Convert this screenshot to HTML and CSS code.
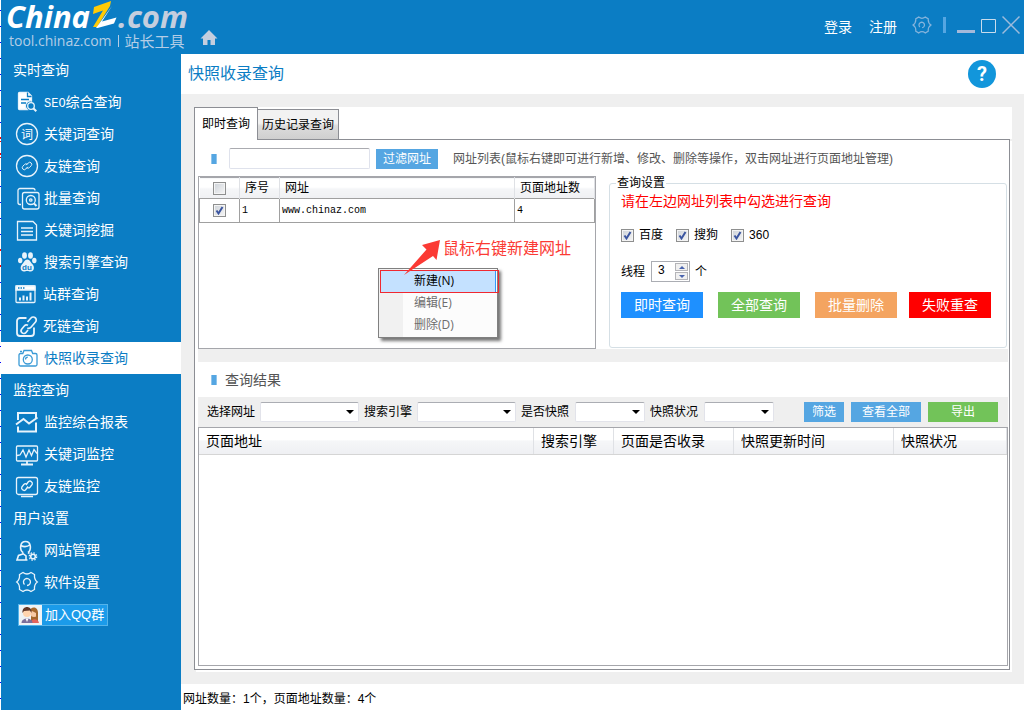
FILE: index.html
```html
<!DOCTYPE html>
<html lang="zh-CN">
<head>
<meta charset="utf-8">
<meta name="viewport" content="width=device-width, initial-scale=1">
<title>快照收录查询 - 站长工具</title>
<link rel="stylesheet" href="styles.css">
</head>
<body>
<div class="app">
  <header class="topbar">
    <a class="brand" href="#" aria-label="ChinaZ.com 站长工具">
      <span class="brand-name">China<svg class="brand-mark" width="30" height="30" viewBox="0 0 30 30" aria-hidden="true"><path d="M5 7 22 1 21 6 8 27H4L14 10.500 4 14z" fill="#ffcb05"/><path d="M23 6 13 21.500 27.500 17.500 25 23.500 8.500 28H7z" fill="#fff"/></svg><span class="brand-tld">.com</span></span>
      <span class="brand-sub"><span>tool.chinaz.com</span><span class="brand-rule"></span><span class="brand-cn">站长工具</span></span>
    </a>
    <a class="home" href="#" aria-label="首页"><svg width="18" height="16" viewBox="0 0 18 16"><path d="M9 0 0.500 8.500H3V15h4.500v-5h3v5H15V8.500h2.500z" fill="#c5cede"/></svg></a>
    <nav class="account">
      <a href="#">登录</a>
      <a href="#">注册</a>
    </nav>
    <div class="window-tools">
      <button class="tool" type="button" aria-label="设置"><svg width="20" height="20" viewBox="0 0 24 24" fill="none" stroke="#86b4dc" stroke-width="1.500"><path d="M8 2.500Q12 5.500 16 2.500L19.500 4.500Q19 9.500 22.800 12 19 14.500 19.500 19.500L16 21.500Q12 18.500 8 21.500L4.500 19.500Q5 14.500 1.200 12 5 9.500 4.500 4.500z"/><path d="M9.500 14.500A3.300 3.300 0 1 1 12 15.300"/></svg></button>
      <span class="divider"></span>
      <button class="tool" type="button" aria-label="最小化"><svg width="18" height="20" viewBox="0 0 18 20"><path d="M0 15h18v3H0z" fill="#a5b9da"/></svg></button>
      <button class="tool" type="button" aria-label="最大化"><svg width="15" height="20" viewBox="0 0 15 20"><path d="M.5 4.500h14v13H.5z" fill="none" stroke="#c9dcec"/></svg></button>
      <button class="tool" type="button" aria-label="关闭"><svg width="18" height="20" viewBox="0 0 18 20"><path d="M.5 1.500l17 17M17.500 1.500l-17 17" stroke="#9dbbdc" stroke-width="1.500"/></svg></button>
    </div>
  </header>

  <div class="body">
    <nav class="sidebar">
      <h2 class="side-title">实时查询</h2>
      <a class="side-item" href="#"><svg class="icon" viewBox="0 0 24 24"><path d="M4.500 2.500H13l3.500 3.500v5a5 5 0 0 0-4.500 8.500H4.500a1 1 0 0 1-1-1v-15a1 1 0 0 1 1-1z" fill="#fff"/><path d="M12.500 2.500v4h4" fill="none" stroke="#0b7dc4"/><path d="M6 9.500h8M6 13h5" stroke="#0b7dc4" stroke-width="1.300"/><circle cx="16" cy="16" r="3.300"/><path d="M18.300 18.300l3 3" stroke-width="2"/></svg><span><span class="latin">SEO</span>综合查询</span></a>
      <a class="side-item" href="#"><svg class="icon" viewBox="0 0 24 24"><circle cx="12" cy="12" r="10.500"/><text x="12" y="16.500" class="icon-word">词</text></svg><span>关键词查询</span></a>
      <a class="side-item" href="#"><svg class="icon" viewBox="0 0 24 24"><circle cx="12" cy="12" r="10.500"/><path stroke-width="1" d="M11.200 11.200l2-2.200a2 2 0 0 1 3 2.700l-1.700 1.800a2 2 0 0 1-2.700.2M12.800 12.800l-2 2.200a2 2 0 0 1-3-2.700l1.700-1.800a2 2 0 0 1 2.700-.2"/></svg><span>友链查询</span></a>
      <a class="side-item" href="#"><svg class="icon" viewBox="0 0 24 24"><path d="M6 18.500H5a2 2 0 0 1-2-2v-12a2 2 0 0 1 2-2h13a2 2 0 0 1 2 2"/><rect x="7.500" y="6.500" width="16.500" height="16.500" rx="2"/><circle cx="15.800" cy="14" r="4.500"/><circle cx="15.800" cy="14" r="1.200"/><path d="M19 17.500l2.500 2.500" stroke-width="2"/></svg><span>批量查询</span></a>
      <a class="side-item" href="#"><svg class="icon" viewBox="0 0 24 24"><path d="M2.500 3.500h15.500l3.500 3.500v15h-19z"/><path d="M6 10h12M6 13.500h12M6 17h12"/></svg><span>关键词挖掘</span></a>
      <a class="side-item" href="#"><svg class="icon" viewBox="0 0 24 24"><g fill="#e8f3fb" stroke="none"><ellipse cx="9.500" cy="5.500" rx="2.400" ry="3.200"/><ellipse cx="15.500" cy="5.500" rx="2.400" ry="3.200"/><ellipse cx="5.200" cy="10.500" rx="2.200" ry="2.800"/><ellipse cx="19.300" cy="10.500" rx="2.200" ry="2.800"/><path d="M12.300 9.500c2.500 0 3.500 3 5 4.500 3 3 1.500 7.500-1.500 7.500-2 0-2-.5-3.500-.5s-2 .5-3.500.5c-3 0-4.500-4.500-1.500-7.500 1.500-1.500 2.500-4.500 5-4.500z"/></g><text x="12" y="19.500" class="icon-du">du</text></svg><span>搜索引擎查询</span></a>
      <a class="side-item side-item-wide" href="#"><svg class="icon" viewBox="0 0 24 24"><rect x="1" y="4" width="19" height="16.500" rx="1"/><path d="M1 4h19v4H1z" fill="#fff"/><path d="M3 6h7" stroke="#0b7dc4" stroke-dasharray="1.500 1"/><path d="M5 18.500v-3M8.500 18.500v-5M12 18.500v-4M15.500 18.500v-8" stroke-width="2"/></svg><span>站群查询</span></a>
      <a class="side-item side-item-wide" href="#"><svg class="icon" viewBox="0 0 24 24"><path stroke-width="1.800" d="M11.500 4H5a3 3 0 0 0-3 3v12a3 3 0 0 0 3 3h11a3 3 0 0 0 3-3v-5.500"/><path stroke-width="1.700" d="M12.500 8l3.500-4a3 3 0 0 1 4.500 4L16 13.200a3 3 0 0 1-3.600.7M13 11.300a3 3 0 0 0-3.700.7L6.800 15a2.700 2.700 0 0 0 4.200 3.500l2-2.500"/></svg><span>死链查询</span></a>
      <a class="side-item is-active" href="#" aria-current="page"><svg class="icon" viewBox="0 0 24 24"><path d="M5.500 7.500h2.300l1.200-3h7.500l1.200 3h2.800a1.500 1.500 0 0 1 1.500 1.500v9.500a1.500 1.500 0 0 1-1.500 1.500h-15A1.500 1.500 0 0 1 4 18.500V9a1.500 1.500 0 0 1 1.500-1.500z"/><circle cx="12.800" cy="13.500" r="4.500"/><path d="M10.500 13.500a2.300 2.300 0 0 1 2.300-2.300M5 5.500h2"/></svg><span>快照收录查询</span></a>

      <h2 class="side-title">监控查询</h2>
      <a class="side-item" href="#"><svg class="icon" viewBox="0 0 24 24"><path stroke-width="2" d="M3 10V3h18v5M3 16.500v5h18v-9"/><path stroke-width="2" d="M1 14.500l7.500-5.500 5.500 4.500 8.500-6"/></svg><span>监控综合报表</span></a>
      <a class="side-item" href="#"><svg class="icon" viewBox="0 0 24 24"><rect x="1.500" y="4" width="21" height="15" rx="1"/><path d="M2 13.500l3-.5 3-5 3 7 3-7 2.500 5.500 2.500-6 3 4"/><path d="M12 19v3M6 22.500h12" stroke-width="1.800"/></svg><span>关键词监控</span></a>
      <a class="side-item" href="#"><svg class="icon" viewBox="0 0 24 24"><rect x="1.500" y="3.500" width="21" height="17" rx="2"/><path d="M11 11l2.500-3.500a2.500 2.500 0 0 1 3.700 3l-2 2.500a2.300 2.300 0 0 1-3.200.3M13 12.500L10.500 16a2.500 2.500 0 0 1-3.700-3l2-2.500a2.300 2.300 0 0 1 3.200-.3M6 22.500h12"/></svg><span>友链监控</span></a>

      <h2 class="side-title">用户设置</h2>
      <a class="side-item" href="#"><svg class="icon" viewBox="0 0 24 24"><path stroke-width="1.600" d="M8 14.500C4.500 12 4.500 3.500 10.500 3.500S16.500 12 13 14.500M5.800 7.500c3 1.500 7 1 9.400-1M8 14.500v1.500l-4.500 1.500L2 22h10.500M13 14.500l1.500 1M8.500 16l2.500 2v4"/><circle cx="18" cy="18.500" r="2.300" stroke-width="1.600"/><circle cx="18" cy="18.500" r="3.700" stroke-dasharray="1.500 1.400"/></svg><span>网站管理</span></a>
      <a class="side-item" href="#"><svg class="icon" viewBox="0 0 24 24"><path d="M8 2.500Q12 5.500 16 2.500L19.500 4.500Q19 9.500 22.300 12 19 14.500 19.500 19.500L16 21.500Q12 18.500 8 21.500L4.500 19.500Q5 14.500 1.700 12 5 9.500 4.500 4.500z"/><path d="M9.500 14.500A3.500 3.500 0 1 1 12 15.500"/></svg><span>软件设置</span></a>
      <a class="qq" href="#"><svg width="23" height="22" viewBox="0 0 23 22"><path d="M0 0h23v22H0z" fill="#eef3f6"/><path d="M12 19V8a5 5 0 0 1 7 1v9z" fill="#a4672c"/><circle cx="15" cy="9.500" r="3.500" fill="#f7c9a4"/><path d="M11 8c0-6 8-6 8 1v6h-2V9l-4-2z" fill="#a4672c"/><path d="M12 19c0-5 7-5 8 0z" fill="#e3645d"/><circle cx="8" cy="9" r="4" fill="#ffd4ae"/><path d="M3.500 9C2.500 1 13.500 1 12.500 9L11 6.500 5 7z" fill="#60382a"/><path d="M2.500 19c0-6 11-6 11 0z" fill="#7b6f9b"/><path d="M6.500 14.500h3L8 18z" fill="#fff"/></svg><span>加入QQ群</span></a>
    </nav>

    <main class="main">
      <div class="page-head">
        <h1>快照收录查询</h1>
        <button class="help" type="button" aria-label="帮助">?</button>
      </div>

      <div class="workspace">
        <div class="tabs" role="tablist">
          <button class="tab is-current" type="button" role="tab" aria-selected="true">即时查询</button>
          <button class="tab" type="button" role="tab" aria-selected="false">历史记录查询</button>
        </div>
        <section class="tab-page">
          <div class="filter-row">
            <span class="marker"></span>
            <input class="url-filter" type="text" aria-label="网址">
            <button class="btn btn-blue" type="button">过滤网址</button>
            <p class="hint">网址列表(鼠标右键即可进行新增、修改、删除等操作，双击网址进行页面地址管理)</p>
          </div>

          <div class="panels">
            <div class="site-list">
              <table class="sites">
                <colgroup><col class="c-check"><col class="c-no"><col><col class="c-count"></colgroup>
                <thead><tr><th><input class="check" type="checkbox" aria-label="全选"></th><th>序号</th><th>网址</th><th>页面地址数</th></tr></thead>
                <tbody><tr><td><input class="check" type="checkbox" checked aria-label="选择 www.chinaz.com"></td><td>1</td><td>www.chinaz.com</td><td>4</td></tr></tbody>
              </table>
              <p class="callout">鼠标右键新建网址</p>
              <div class="context-menu" role="menu">
                <button class="menu-item is-hot" type="button" role="menuitem">新建(N)</button>
                <button class="menu-item" type="button" role="menuitem">编辑(E)</button>
                <button class="menu-item" type="button" role="menuitem">删除(D)</button>
              </div>
              <svg class="arrow" width="38" height="38" viewBox="0 0 38 38" aria-hidden="true"><path d="M37 1 19 6l4.500 4.500L1 36l29-19 3.500 4z" fill="#fb3a34"/></svg>
            </div>

            <fieldset class="settings">
              <legend>查询设置</legend>
              <p class="notice">请在左边网址列表中勾选进行查询</p>
              <div class="engines">
                <label><input class="check" type="checkbox" checked>百度</label>
                <label><input class="check" type="checkbox" checked>搜狗</label>
                <label><input class="check" type="checkbox" checked>360</label>
              </div>
              <div class="threads">
                <label for="threads">线程</label>
                <span class="spinner">
                  <input id="threads" type="text" inputmode="numeric" value="3">
                  <span class="steps">
                    <button type="button" aria-label="增加"><svg width="6" height="3" viewBox="0 0 6 3"><path d="M3 0l3 3H0z" fill="#4a64ae"/></svg></button>
                    <button type="button" aria-label="减少"><svg width="6" height="3" viewBox="0 0 6 3"><path d="M3 3l3-3H0z" fill="#4a64ae"/></svg></button>
                  </span>
                </span>
                <span>个</span>
              </div>
              <div class="actions">
                <button class="btn btn-large btn-azure" type="button">即时查询</button>
                <button class="btn btn-large btn-green" type="button">全部查询</button>
                <button class="btn btn-large btn-orange" type="button">批量删除</button>
                <button class="btn btn-large btn-red" type="button">失败重查</button>
              </div>
            </fieldset>
          </div>

          <div class="results-head">
            <span class="marker"></span>
            <h2>查询结果</h2>
          </div>

          <div class="result-filter">
            <label for="f-url">选择网址</label>
            <select id="f-url" class="wide"><option></option></select>
            <label for="f-engine">搜索引擎</label>
            <select id="f-engine" class="wide"><option></option></select>
            <label for="f-snap">是否快照</label>
            <select id="f-snap"><option></option></select>
            <label for="f-state">快照状况</label>
            <select id="f-state"><option></option></select>
            <div class="filter-actions">
              <button class="btn btn-blue btn-short" type="button">筛选</button>
              <button class="btn btn-blue btn-mid" type="button">查看全部</button>
              <button class="btn btn-green btn-mid" type="button">导出</button>
            </div>
          </div>

          <div class="result-list">
            <table class="results">
              <colgroup><col><col class="r-engine"><col class="r-indexed"><col class="r-time"><col class="r-state"></colgroup>
              <thead><tr><th>页面地址</th><th>搜索引擎</th><th>页面是否收录</th><th>快照更新时间</th><th>快照状况</th></tr></thead>
            </table>
          </div>
        </section>
      </div>

      <footer class="status">网址数量：1个，页面地址数量：4个</footer>
    </main>
  </div>
</div>
</body>
</html>
```
FILE: styles.css
```css
:root {
  --blue: #0b7dc4;
  --sky: #55a6e2;
  --grey: #efefef;
  --green: #72c359;
}

* { box-sizing: border-box; }

body {
  margin: 0;
  font: 12px/16px "Liberation Sans", "Noto Sans CJK SC", sans-serif;
  color: #000;
}

h1, h2, p { margin: 0; font-weight: normal; }
a { color: inherit; text-decoration: none; }
button, input, select { font: inherit; color: inherit; margin: 0; }
button { border: 0; padding: 0; background: none; cursor: pointer; }
svg { display: block; }
table { border-collapse: collapse; table-layout: fixed; width: 100%; }
th { font-weight: normal; text-align: left; }

/* Shell, with the ticked strip along the window's left edge */
.app {
  display: flex;
  flex-direction: column;
  min-height: 100vh;
  padding-left: 1px;
  background:
    linear-gradient(transparent 137px, #f00 137px 139px, #fff 139px 141px, #f00 141px 142px, transparent 142px 153px, #f00 153px 155px, #fff 155px 157px, #f00 157px 158px, transparent 158px 249px, #f00 249px 251px, transparent 251px 265px, #f00 265px 267px, transparent 267px),
    repeating-linear-gradient(#fff 0 10px, #00f 10px 11px, #fff 11px 16px);
}

.topbar {
  display: flex;
  height: 54px;
  padding: 0 4px 0 5px;
  background: var(--blue);
  color: #fff;
}

.brand { display: flex; flex-direction: column; }
.brand-name {
  display: flex;
  height: 33px;
  font: italic bold 31px/33px "Open Sans", "Noto Sans", sans-serif;
}
.brand-mark { margin: 0 -1px; }
.brand-tld { color: #c5cede; }
.brand-sub {
  display: flex;
  align-items: center;
  padding-left: 3px;
  font: 14px/16px "Open Sans", "Noto Sans", sans-serif;
  color: #b4cde6;
}
.brand-rule { width: 1px; height: 12px; margin: 0 6px; background: #b4cde6; }
.brand-cn { font: 15px/16px "Noto Sans CJK SC", sans-serif; }

.home { align-self: flex-end; margin: 0 auto 8px 12px; }

.account { display: flex; align-items: center; gap: 17px; font-size: 14px; }
.window-tools { display: flex; align-items: center; gap: 6px; margin-left: 15px; padding-bottom: 4px; }
.divider { width: 3px; height: 16px; margin: 0 5px; background: #55a6e2; }

.body { flex: 1; display: flex; }

/* Sidebar */
.sidebar {
  flex: 0 0 180px;
  background: var(--blue);
  color: #fff;
  font-size: 14px;
}
.side-title { padding-left: 12px; font-size: 14px; line-height: 32px; }
.side-item {
  display: flex;
  align-items: center;
  gap: 5px;
  height: 32px;
  padding-left: 14px;
}
.side-item-wide { gap: 4px; }
.side-item.is-active { background: #fff; color: var(--blue); }
.latin { font: 12px "Liberation Mono", monospace; }
.icon {
  width: 24px;
  height: 24px;
  overflow: visible;
  fill: none;
  stroke: #e8f3fb;
  stroke-width: 1.3;
}
.is-active .icon { stroke: #3a9ad6; }
.icon-word { font-size: 12px; text-anchor: middle; fill: #fff; stroke: none; }
.icon-du { font: bold 8px "Liberation Sans", sans-serif; text-anchor: middle; fill: var(--blue); stroke: none; }

.qq {
  display: inline-flex;
  align-items: center;
  gap: 3px;
  height: 22px;
  margin: 6px 0 0 17px;
  padding-right: 3px;
  border: 1px solid #55b4ea;
  background: #1b9bea;
  font-size: 13px;
  overflow: hidden;
}

/* Page */
.main { flex: 1; min-width: 0; display: flex; flex-direction: column; background: #fff; }
.page-head {
  display: flex;
  align-items: center;
  justify-content: space-between;
  height: 40px;
  padding: 0 28px 0 7px;
}
.page-head h1 { font-size: 16px; color: var(--blue); }
.help {
  width: 28px;
  height: 28px;
  border-radius: 50%;
  background: #1296db;
  color: #fff;
  font: bold 20px/28px Roboto, sans-serif;
}

.workspace {
  flex: 1;
  display: flex;
  flex-direction: column;
  padding: 13px 12px 12px 13px;
  background: var(--grey);
}

.tabs { display: flex; align-items: flex-end; background: #fff; }
.tab {
  height: 30px;
  padding: 0 4px;
  border: 1px solid #8c8e94;
  border-bottom: 0;
  border-left: 0;
  background: linear-gradient(#f2f2f2 45%, #dcdcdc 55%, #cfcfcf);
}
.tab.is-current {
  height: 33px;
  margin-bottom: -1px;
  padding: 0 7px;
  border-left: 1px solid #8c8e94;
  background: #fff;
  z-index: 1;
}

.tab-page {
  flex: 1;
  display: flex;
  flex-direction: column;
  margin-bottom: 2px;
  margin-right: 2px;
  padding: 8px 1px 3px 3px;
  border: 1px solid #8c8e94;
  background: #fff;
  box-shadow: 2px 2px 0 #fff;
}

.marker { width: 6px; height: 10px; background: var(--sky); border: solid #90c5ec; border-width: 0 1px; }

.filter-row { display: flex; align-items: center; padding-left: 13px; }
.url-filter {
  width: 141px;
  height: 21px;
  margin: 0 6px 0 12px;
  border: 1px solid #dfe2ec;
  border-top-color: #aaabb0;
  border-radius: 2px;
}
.hint { margin-left: 15px; color: #555; }

.btn { height: 20px; padding: 0 7px; color: #fff; line-height: 18px; }
.btn-blue { background: var(--sky); }
.btn-green { background: var(--green); }
.btn-azure { background: #1e90ff; }
.btn-orange { background: #f4a460; }
.btn-red { background: #f00; }
.btn-short { width: 40px; }
.btn-mid { width: 70px; }
.btn-large { width: 82px; height: 26px; font-size: 14px; }

.panels {
  display: grid;
  grid-template-columns: 1fr 1fr;
  gap: 13px;
  padding: 7px 1px 0 0;
  border-bottom: 13px solid var(--grey);
}

.site-list { position: relative; border: 1px solid #a5a6ab; }
.sites { border-top: 1px solid #a5a6ab; }
.sites th {
  height: 21px;
  padding: 0 5px;
  border-right: 1px solid #dfe1e5;
  background: linear-gradient(#fff 45%, #f5f6f8 50%, #eff0f3);
}
.sites td {
  height: 24px;
  padding: 0 2px;
  border: 1px solid #a0a0a0;
  font: 10px "Liberation Mono", monospace;
}
.sites th:first-child, .sites td:first-child { text-align: center; padding: 0; }
.c-check, .c-no { width: 40px; }
.c-count { width: 80px; }

.check {
  appearance: none;
  display: inline-block;
  width: 13px;
  height: 13px;
  border: 1px solid #8e8f8f;
  background: linear-gradient(135deg, #cdd2d8, #f6f6f6);
  box-shadow: inset 0 0 0 1px #f4f4f4;
  vertical-align: middle;
}
.check:checked {
  background: url("data:image/svg+xml,%3Csvg xmlns='http://www.w3.org/2000/svg' viewBox='0 0 11 11'%3E%3Cpath d='M2.500 5.500l2 3 4-6.500' fill='none' stroke='%233b55a0' stroke-width='2'/%3E%3C/svg%3E"), linear-gradient(135deg, #cdd2d8, #f6f6f6);
}

.callout { position: absolute; left: 244px; top: 62px; font-size: 16px; line-height: 20px; color: #fb3a34; white-space: nowrap; }
.arrow { position: absolute; left: 204px; top: 62px; }
.context-menu {
  position: absolute;
  left: 179px;
  top: 91px;
  width: 120px;
  padding: 1px;
  border: 1px solid #808080;
  background: linear-gradient(90deg, #f1f1f1 24px, #fcfcfc 24px);
  box-shadow: 3px 3px 3px #777;
}
.menu-item {
  display: block;
  width: 100%;
  height: 22px;
  padding-left: 34px;
  font-family: "Open Sans", "Noto Sans CJK SC", sans-serif;
  text-align: left;
  color: #6d6d6d;
}
.menu-item.is-hot { position: relative; color: #000; background: #c4e1ff; border-right: 1px solid #3399ff; }
.menu-item.is-hot::after {
  content: "";
  position: absolute;
  inset: 0 -4px -1px 0;
  border: 1px solid #f02830;
}

.settings {
  min-width: 0;
  margin: 0 0 1px;
  padding: 1px 11px 29px;
  border: 1px solid #d5dfe5;
  border-radius: 3px;
}
.settings legend { margin-left: -5px; padding: 0 1px; line-height: 14px; }
.notice { font-size: 14px; line-height: 20px; color: #f00; }
.engines { display: flex; gap: 13px; margin-top: 16px; }
.engines label { display: flex; align-items: center; gap: 5px; }
.threads { display: flex; align-items: center; gap: 5px; margin-top: 18px; }
.spinner { display: flex; width: 39px; height: 21px; margin-left: 1px; border: 1px solid #abadb3; }
.spinner input { flex: 1; min-width: 0; padding: 0 0 3px 6px; border: 0; }
.steps { display: flex; flex-direction: column; gap: 1px; width: 15px; padding: 1px; }
.steps button { flex: 1; display: grid; place-items: center; border: 1px solid #b4b4b8; background: #f0f0f0; }
.actions { display: flex; gap: 15px; margin-top: 10px; }
.actions .btn-red { margin-left: -3px; }

.results-head { display: flex; align-items: center; gap: 8px; height: 35px; padding-left: 13px; }
.results-head h2 { font-size: 14px; color: #555; }

.result-filter {
  display: flex;
  align-items: center;
  height: 30px;
  padding-left: 9px;
  background: var(--grey);
}
.result-filter select {
  appearance: none;
  width: 70px;
  height: 20px;
  margin: 0 5px 0 6px;
  border: 1px solid #e2e3ea;
  border-top-color: #abadb3;
  border-radius: 2px;
  background: #fff url("data:image/svg+xml,%3Csvg xmlns='http://www.w3.org/2000/svg' width='8' height='4'%3E%3Cpath d='M0 0h8L4 4z'/%3E%3C/svg%3E") no-repeat right 4px center;
}
.result-filter select.wide { width: 99px; margin: 0 5px; }
.filter-actions { display: flex; gap: 7px; margin: 0 10px 0 auto; }

.result-list { flex: 1; border: 1px solid #a5a6ab; min-height: 120px; }
.results th {
  height: 26px;
  padding: 0 7px;
  border-right: 1px solid #dfe1e5;
  border-bottom: 1px solid #d5d5d5;
  background: linear-gradient(#fff 45%, #f5f6f8 50%, #eff0f3);
  font-size: 14px;
}
.r-engine { width: 80px; }
.r-indexed { width: 120px; }
.r-time { width: 160px; }
.r-state { width: 113px; }

.status { height: 26px; padding: 7px 2px 0; }
```
